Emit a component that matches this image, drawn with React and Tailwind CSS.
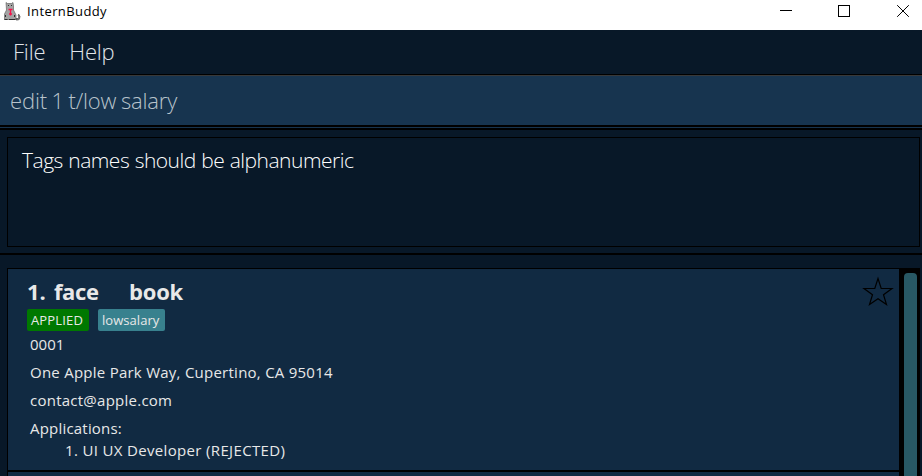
const LIGHT = "font-['Open_Sans','Noto_Sans',sans-serif] font-light whitespace-pre";
const TEXT = "font-['Open_Sans','Noto_Sans',sans-serif] whitespace-pre";

function CatIcon() {
  return (
    <svg className="h-5 w-[18px] shrink-0" viewBox="0 0 18 20">
      <path d="M3 1.500 4.500 2.500h4l1.500-1L10.500 5v4l2.500 5v4.500H1.500V13l2-4z" fill="#a3a3a3" stroke="#555" strokeWidth="0.600" />
      <path d="M13 17.500h2.300l.5-1.500-.8-2 .8-.8 1.200 2.300-.6 2.800-1.400.7h-2z" fill="#888" stroke="#333" strokeWidth="0.600" />
      <path d="M5 4.500h1M8 4.500h1M1.500 18.500h3M6 18.500h6M2.500 14v2M11.500 14v2" stroke="#222" strokeWidth="0.900" fill="none" />
      <path d="M5.500 8.500h4M7.500 8.500v6M6 13h3" stroke="#f5144b" strokeWidth="1.300" fill="none" />
    </svg>
  );
}

function TitleBar() {
  return (
    <header className="flex h-[30px] shrink-0 items-start bg-white text-black">
      <div className="flex pl-[3px] pt-[1px]">
        <CatIcon />
        <span className={`${TEXT} ml-[6px] text-[13px] leading-5 tracking-[0.400px]`}>InternBuddy</span>
      </div>
      <svg className="ml-auto h-[30px] w-[142px]" viewBox="0 0 142 30" fill="none" stroke="#000">
        <path d="M0 10.500h12M58.500 5.500h11v11h-11z" shapeRendering="crispEdges" />
        <path d="m117.200 5.200 11.600 11.600m0-11.600-11.600 11.600" />
      </svg>
    </header>
  );
}

function Card() {
  return (
    <article className="flex h-[201px] shrink-0 bg-[#112a42] pl-[19px] text-[#e8e8e8]">
      <div className="flex flex-col items-start pt-[6px]">
        <h1 className={`${TEXT} flex text-[22px] font-bold leading-[32px]`}>
          <span className="w-[27px]">1.</span>
          <span className="w-[75px] tracking-[-0.400px]">face</span>
          <span className="tracking-[-0.2px]">book</span>
        </h1>
        <div className={`${TEXT} mt-[2px] flex gap-[9px] text-[13px] font-medium leading-[22px]`}>
          <span className="w-[62px] rounded-[2px] bg-[#007800] pl-[4px] tracking-[0.150px]">APPLIED</span>
          <span className="w-[67px] rounded-[2px] bg-[#38818e] pl-[4px] tracking-[0.050px]">lowsalary</span>
        </div>
        <div className={`${TEXT} -mt-px flex flex-col pl-[3px] text-[15px] leading-[28px] tracking-[0.250px]`}>
          <span className="tracking-normal">0001</span>
          <span>One Apple Park Way, Cupertino, CA 95014</span>
          <span>contact@apple.com</span>
          <span className="tracking-[0.200px]">Applications:</span>
          <span className="-mt-[3px] pl-[35px] leading-[22px] tracking-[0.340px]">1. UI UX Developer (REJECTED)</span>
        </div>
      </div>
      <svg className="ml-auto mr-[5px] mt-[7px] h-8 w-8" viewBox="0 0 32 32" fill="none" stroke="#000" strokeWidth="1.200">
        <path d="M16 2.500 19.200 12.500H30L21.500 18.800 24.500 28.500 16 22.800 7.500 28.500 10.500 18.800 2 12.500H12.800z" />
      </svg>
    </article>
  );
}

export default function App() {
  return (
    <main className="flex h-[476px] w-[922px] flex-col overflow-hidden bg-[#081828]">
      <TitleBar />
      <nav className={`${LIGHT} flex h-[44px] shrink-0 gap-[24px] pl-[13px] text-[22px] leading-[42px] tracking-[-0.200px] text-[#e0e5ea]`}>
        <span>File</span>
        <span>Help</span>
      </nav>
      <div className="h-[52px] shrink-0 border-y border-black bg-[#17344f]">
        <div className={`${LIGHT} h-[50px] border-t border-[#383838] pl-[10px] text-[22px] leading-[49px] tracking-[-0.150px] [word-spacing:-1px] text-[#b8c3cb]`}>
          edit 1 t/low salary
        </div>
      </div>
      <div className="h-[4px] shrink-0 border-b-2 border-t border-black bg-[#17344f]" />
      <section className="h-[125px] shrink-0 border-b-2 border-black pl-[7px] pr-[2px] pt-[7px]">
        <div className={`${LIGHT} h-[110px] border border-black pl-[14px] pt-[7px] text-[21px] leading-[30px] tracking-[-0.500px] [word-spacing:0.500px] text-white`}>
          Tags names should be alphanumeric
        </div>
      </section>
      <section className="ml-[7px] mr-[2px] mt-[13px] flex h-[208px] shrink-0 border-l border-t border-black bg-black">
        <div className="flex w-[891px] flex-col gap-[2px]">
          <Card />
          <div className="h-[4px] bg-[#112a42]" />
        </div>
        <div className="ml-[5px] mt-[4px] h-[204px] w-[13px] rounded-t-[4px] bg-[#285864]" />
      </section>
    </main>
  );
}
